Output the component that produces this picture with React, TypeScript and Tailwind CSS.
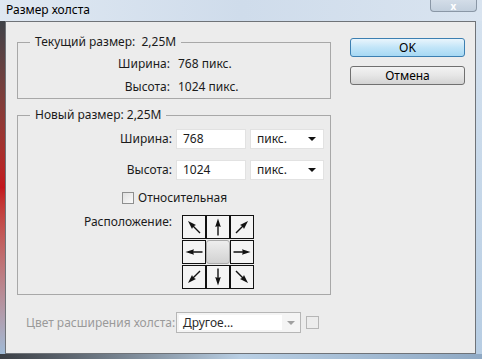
import type { ReactNode } from 'react'

const font = { fontFamily: '"Noto Sans", "Open Sans", sans-serif' }

// one arrow, pointing up; rotated per cell
function Arrow({ rot }: { rot: string }) {
  return (
    <svg width="20" height="20" viewBox="0 0 20 20" className={rot}>
      <path d="M10 1.5 L12.8 10 L10.7 9.3 L10.7 18.5 L9.3 18.5 L9.3 9.3 L7.2 10 Z" fill="#111" />
    </svg>
  )
}

function Cell({ children }: { children: ReactNode }) {
  return (
    <div className="w-6 h-6 border border-[#111] bg-[#f4f4f4] flex items-center justify-center">
      {children}
    </div>
  )
}

function Select({ value }: { value: string }) {
  return (
    <div className="w-[74px] h-5 bg-white border border-[#e2e2e2] flex items-center justify-between pl-[6px] pr-[7px]">
      <span>{value}</span>
      <span className="w-0 h-0 border-l-[4px] border-r-[4px] border-t-[4px] border-l-transparent border-r-transparent border-t-[#111]" />
    </div>
  )
}

export default function App() {
  return (
    <div
      className="w-[482px] h-[359px] overflow-hidden flex flex-col text-[12px] text-[#1b1b1b] bg-[#c8d8ea]"
      style={font}
    >
      {/* title bar */}
      <div className="h-[21px] flex items-start justify-between bg-gradient-to-r from-[#dfe8f2] via-[#cfdceb] to-[#d9e4f0]">
        <div className="pl-[6px] pt-[1px] text-[12px] text-black">Размер холста</div>
        <div className="w-[47px] h-[12px] mr-[5px] rounded-b-[4px] border border-t-0 border-[#8a97a6] bg-gradient-to-b from-[#d3dde8] to-[#c2cfdd] flex items-center justify-center text-[10px] leading-none text-white font-bold">
          x
        </div>
      </div>

      <div className="flex flex-1">
        <div className="w-[5px] bg-gradient-to-b from-[#3e4248] via-[#c3151d] to-[#9fbad6]" />

        <div className="w-[471px] border border-[#6f7378] bg-[#ececec] flex">
          {/* left column */}
          <div className="pl-[11px] pt-[11px] w-[325px]">
            <fieldset className="border border-[#a8a8a8] h-[66px]">
              <legend className="ml-[12px] px-[5px]">Текущий размер:&nbsp; 2,25M</legend>
              <div className="grid grid-cols-[152px_1fr] gap-x-[8px] gap-y-[5px] pt-[4px]">
                <span className="text-right">Ширина:</span>
                <span>768 пикс.</span>
                <span className="text-right">Высота:</span>
                <span>1024 пикс.</span>
              </div>
            </fieldset>

            <fieldset className="border border-[#a8a8a8] mt-[7px] h-[189px]">
              <legend className="ml-[12px] px-[5px]">Новый размер: 2,25M</legend>
              <div className="grid grid-cols-[154px_70px_74px] gap-x-[4px] gap-y-[11px] items-center pt-[5px]">
                <span className="text-right">Ширина:</span>
                <div className="h-5 bg-white border border-[#e2e2e2] pl-[6px] leading-[18px]">768</div>
                <Select value="пикс." />
                <span className="text-right">Высота:</span>
                <div className="h-5 bg-white border border-[#e2e2e2] pl-[6px] leading-[18px]">1024</div>
                <Select value="пикс." />
              </div>
              <div className="flex items-center pl-[104px] mt-[9px]">
                <span className="w-3 h-3 border border-[#8e8f8f] bg-gradient-to-br from-[#e0e0e0] to-[#fafafa] mr-[4px]" />
                <span>Относительная</span>
              </div>
              <div className="flex items-start mt-[8px]">
                <span className="w-[154px] text-right leading-none pt-[1px]">Расположение:</span>
                <div className="ml-[10px] flex flex-col gap-y-[1px]">
                  <div className="flex">
                    <Cell><Arrow rot="-rotate-45" /></Cell>
                    <Cell><Arrow rot="" /></Cell>
                    <Cell><Arrow rot="rotate-45" /></Cell>
                  </div>
                  <div className="flex">
                    <Cell><Arrow rot="-rotate-90" /></Cell>
                    <div className="w-6 h-6 rounded-[3px] border border-[#a9a9a9] bg-gradient-to-b from-[#eeeeee] to-[#d2d2d2]" />
                    <Cell><Arrow rot="rotate-90" /></Cell>
                  </div>
                  <div className="flex">
                    <Cell><Arrow rot="rotate-[225deg]" /></Cell>
                    <Cell><Arrow rot="rotate-180" /></Cell>
                    <Cell><Arrow rot="rotate-[135deg]" /></Cell>
                  </div>
                </div>
              </div>
            </fieldset>

            <div className="flex items-center mt-[17px] pl-[9px] text-[#9a9a9a]">
              <span className="w-[150px]">Цвет расширения холста:</span>
              <div className="w-[125px] h-[21px] border border-[#b6b6b6] bg-[#f4f4f4] flex items-stretch">
                <div className="flex-1 bg-white m-[2px] mr-0 pl-[4px] leading-[15px] text-[#2a2a2a]">Другое...</div>
                <div className="w-[18px] flex items-center justify-center">
                  <span className="w-0 h-0 border-l-[4px] border-r-[4px] border-t-[4px] border-l-transparent border-r-transparent border-t-[#a0a0a0]" />
                </div>
              </div>
              <span className="ml-[5px] w-[13px] h-[13px] border border-[#b6b6b6]" />
            </div>
          </div>

          {/* buttons */}
          <div className="pl-[19px] pt-[16px] flex flex-col gap-[9px]">
            <button
              type="button"
              className="w-[115px] h-[19px] rounded-[3px] border border-[#3c7fb1] bg-gradient-to-b from-[#e9f5fc] via-[#c2e5f8] to-[#a6d8f4] leading-none text-black"
            >
              OK
            </button>
            <button
              type="button"
              className="w-[115px] h-[19px] rounded-[3px] border border-[#707070] bg-gradient-to-b from-[#f3f3f3] via-[#e6e6e6] to-[#d3d3d3] leading-none text-black"
            >
              Отмена
            </button>
          </div>
        </div>

        <div className="flex-1 bg-gradient-to-b from-[#d5e2ef] to-[#b7cde3]" />
      </div>

      <div className="h-[5px] bg-gradient-to-r from-[#3b3f45] via-[#b9cfe4] to-[#8fa9c4]" />
    </div>
  )
}
